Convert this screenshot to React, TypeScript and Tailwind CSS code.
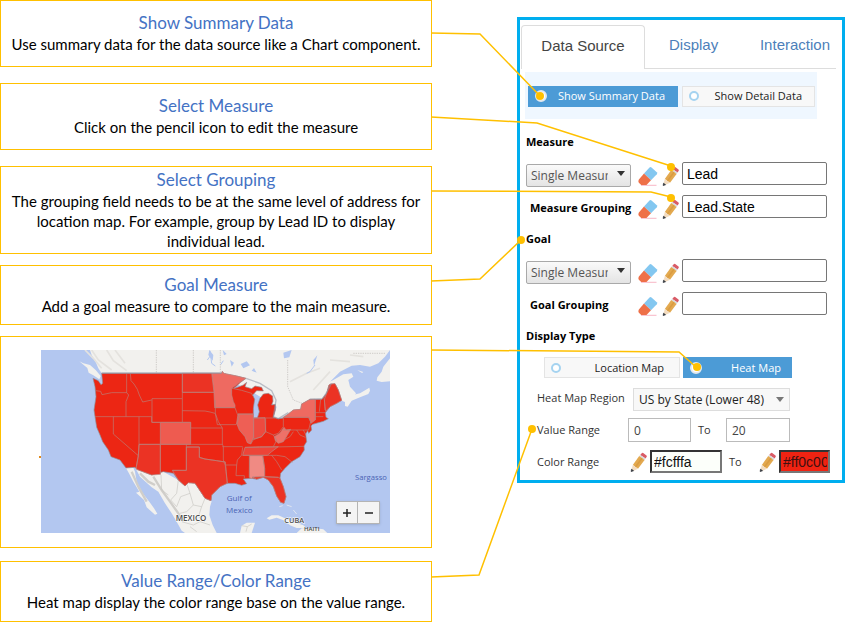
import React from "react";
import clsx from "clsx";

const calloutFont = "font-['Lato','Open_Sans',sans-serif]";
const formFont = "font-['Open_Sans','Noto_Sans',sans-serif]";
const arial = "font-['Liberation_Sans',Arial,sans-serif]";

const Eraser = () => (
  <svg viewBox="0 0 20 20" className="w-5 h-5">
    <path d="M3 19.3h15.500" stroke="#f6a5b8" strokeWidth="0.8" />
    <path d="M11.500 1.500Q12.500 0.600 13.500 1.500L18.800 6.300Q19.700 7.200 18.800 8.200L13 14.300L6 7.600Z" fill="#83c7f0" />
    <path d="M6 7.600L13 14.300L8.500 19H3.200L0.900 16.800Q-0.100 15.300 0.900 13.500Z" fill="#ee7048" />
  </svg>
);

const Pencil = () => (
  <svg viewBox="0 0 18 20" className="w-[18px] h-5">
    <path d="M10.200 2.900L11.700 1.200Q12.300 0.600 13.200 1.100L16.500 3.400Q17.200 4 16.700 4.800L15.600 6.600Z" fill="#d95b66" />
    <path d="M9.200 4.100L10.200 2.900L15.600 6.600L14.600 8Z" fill="#d6dade" />
    <path d="M9.200 4.100L14.600 8L8 16.800L2.800 13.100Z" fill="#e3a94f" />
    <path d="M11.400 5.700L12.700 6.600L6.100 15.400L4.800 14.500Z" fill="#d99c42" />
    <path d="M2.800 13.100L8 16.800L3.800 18.700L1.700 17.200Z" fill="#f3dcc0" />
    <path d="M1.500 17.300L3.500 18.700L1.200 19.500Z" fill="#33373d" stroke="#33373d" strokeWidth="0.8" />
  </svg>
);

const IconButton = ({ label, children }: { label: string; children: React.ReactNode }) => (
  <button type="button" aria-label={label} className="flex shrink-0 cursor-pointer">
    {children}
  </button>
);

type CalloutProps = { title: string; children: React.ReactNode; className: string };

const Callout = ({ title, children, className }: CalloutProps) => (
  <section
    className={clsx(
      "border border-[#ffc000] bg-white px-2 pb-px flex flex-col justify-center text-center",
      className
    )}
  >
    <h2 className="text-[17px] leading-[22px] text-[#4472c4]">{title}</h2>
    <p className="text-[15px] leading-5 text-black">{children}</p>
  </section>
);

const land = "#f2f1ee";

const HeatMap = () => (
  <div className="relative">
    <svg viewBox="33 30 1047 549" className="block w-full" role="img" aria-label="US heat map">
      <rect x="33" y="30" width="1047" height="549" fill="#b3c7f0" />

      {/* Canada */}
      <path
        fill={land}
        d="M180 30L185 45L198 68L205 85L215 100L560 112L640 140L740 200L730 235L745 235L800 220L900 180L935 182L955 190L965 180L978 160L960 140L955 120L970 110L965 100L940 103L910 120L870 140L900 125L930 95L965 77L990 75L1020 80L1045 70L1065 50L1080 30Z"
      />
      <path fill={land} d="M148 64L160 70L180 75L197 90L212 108L208 118L190 106L176 98L172 84Z" />
      <path fill={land} d="M945 185L968 165L990 160L1018 143L1020 152L1015 162L990 172L965 182L953 200L945 198Z" />
      <path fill={land} d="M982 90L1000 96L996 99Z" />
      <path fill={land} d="M1080 55L1060 80L1055 95L1042 112L1040 122L1055 126L1080 124Z" />
      <path
        fill="none"
        stroke="#e4e2de"
        strokeWidth="5"
        d="M165 30L190 55L215 85M185 30L205 60L245 90M230 30L250 62L290 92M255 30L285 70M780 125L830 100L870 85M850 150L900 95M900 60L960 65M960 45L1000 50"
      />
      <path
        fill="#b3c7f0"
        d="M538 30L550 45L548 62L535 45ZM578 30L590 42L582 46ZM600 60L612 68L605 80ZM632 72L650 64L660 76L640 85ZM760 38L785 30L778 52L762 55ZM850 60L862 46L852 78ZM665 92L672 84L680 98Z"
      />
      <path fill="none" stroke="#b3c7f0" strokeWidth="3" d="M540 32L545 70L556 78M532 60L545 42M580 62L572 74M855 75L840 95L830 100" />
      <path
        fill="none"
        stroke="#bcbab6"
        strokeWidth="2"
        strokeDasharray="4 3"
        d="M379 30V98M490 30V98M571 30V95M773 60V140L790 180L830 195M970 40H1065"
      />

      {/* Mexico, Cuba and Hispaniola */}
      <path
        fill={land}
        d="M288 384L310 383L315 395L320 425L338 460L358 485L372 505L382 521L375 524L350 502L342 480L318 458L328 455L310 425L298 402Z"
      />
      <path
        fill={land}
        d="M315 382L330 410L365 442L385 455L405 490L425 520L440 545L455 572L465 579H560L548 555L538 525L540 500L545 484L525 475L495 430L445 420L400 395Z"
      />
      <path fill="none" stroke="#d0ceca" strokeWidth="7" d="M370 410L395 450L420 485L445 520L460 545M330 400L355 425L375 435M305 395L325 440L350 485" />
      <path
        fill="none"
        stroke="#c9c7c3"
        strokeWidth="2"
        d="M393 405L395 450L415 465M445 420L440 460L422 480L440 500L452 470L480 460L470 430M480 460L490 495L470 515L450 520M490 495L515 500L525 475M515 500L505 530L525 545M455 545L490 555L510 545L540 555M480 560L500 575"
      />
      <path fill={land} d="M630 579L635 557L650 548H675L665 579Z" />
      <path fill="none" stroke="#c9c7c3" strokeWidth="2" d="M635 557L652 560L665 552M652 560L648 575" />
      <path fill={land} d="M710 535L725 526L745 526L765 535L790 546L820 556L830 564L800 564L780 556L765 542L740 533L718 539Z" />
      <path fill={land} d="M800 579L815 565L850 564L880 568L892 579Z" />
      <path fill="none" stroke="#dfe5f0" strokeWidth="3" d="M770 495L785 500M790 510L800 522M748 500L758 497" />

      {/* Continental US */}
      <path
        fill="#ec2614"
        stroke="#8f9199"
        strokeWidth="2"
        strokeLinejoin="round"
        d="M189 115L205 122L213 134L218 130L215 100H575L577 94L581 100L590 102L620 108L648 115L632 127L612 145L625 141L640 135L650 127L645 140L665 146L675 138L695 142L700 153L680 152L668 165L674 178L670 205V234L682 234L688 215L683 195L690 175L700 162L715 160L728 168L729 184L725 195L736 193L736 210L730 232L745 236L757 235L775 222L790 210L812 208L815 192L840 178L875 178L890 160L897 135L903 132L915 131L925 150L935 181L920 190L900 200L886 218L888 232L895 236L880 244L848 253L843 258L845 270L836 280L833 272L827 282L830 305L822 318L823 330L810 350L785 365L765 385L752 400L750 415L760 440L768 470L762 490L752 487L740 468L730 440L715 420L700 412L680 418L665 415L640 417L650 431L635 436L615 430L590 430L570 440L545 465L543 482L525 475L512 455L495 430L475 428L465 438L445 420L430 400L400 395L365 405L320 388L315 382L288 384L270 360L243 350L235 330L218 305L210 285L200 262L195 230L192 210L198 170L195 140Z"
      />
      {/* Lower-valued states */}
      <g stroke="#b98a86" strokeWidth="2">
        <path fill="#ee6a61" d="M545 100H575L577 94L581 100L590 102L620 108L648 115L625 130L605 145V165L610 185L615 195V203H554L552 160Z" />
        <path fill="#ee5b50" d="M391 247H482V313H391Z" />
        <path fill="#ee5f55" d="M624 222H670L671 290L662 312L652 308L645 290L628 270L620 250Z" />
        <path fill="#ed4a3f" d="M671 234L705 233L707 275L695 290L671 298Z" />
        <path fill="#f08a83" d="M659 347H698L704 385V410L668 411L665 416L658 412Z" />
        <path fill="#ee6a61" d="M760 232L775 222L790 210L812 208L815 192L840 178H856V240L843 250L837 232Z" />
        <path fill="#ee7168" d="M733 290L750 280L762 262L768 270L782 268L772 285L760 305L745 310L736 302Z" />
        <path fill="#ed4438" d="M638 346L645 322L688 320H745L725 335L712 346Z" />
        <path fill="#eb3324" d="M883 178L890 160L897 135L903 132L915 131L925 150L935 181L920 190L900 200L887 214L885 200Z" />
        <path fill="#eb3324" d="M469 321H508V352L525 357L560 362L586 366L592 430L570 440L545 465L543 482L525 475L512 455L495 430L475 428L465 438L445 420L427 391H469Z" />
        <path fill="#eb3324" d="M327 313H391V403L365 405L320 388L319 380L325 347Z" />
        <path fill="#eb3324" d="M457 100H545L552 157H457Z" />
        <path fill="#eb3324" d="M704 410L745 412L750 415L760 440L768 470L762 490L752 487L740 468L730 440L715 420L700 412L680 418L668 411Z" />
      </g>
      {/* State borders */}
      <path
        fill="none"
        stroke="#b98078"
        strokeWidth="2"
        strokeLinejoin="round"
        d="M197 152L212 154L216 164L245 158H290M290 100V158L296 165L288 185V230M195 230H365M301 100L303 122L312 132L322 148L328 165L338 186L365 180M366 176H457V247H366ZM457 100V176M457 157H552M457 212L525 213L540 216L555 220M250 230V282L325 347L319 380M327 230V313L325 347M365 230V247H391M457 247H482V264H577M327 313H577M391 313V403M469 313V391H427M469 321H508V352L525 357L560 362L586 366M556 180V220L565 245L577 264V312M554 203H615L622 222L628 228L622 248L618 254H562M562 254L556 220M624 222H670M606 145L635 151L665 160L668 168M671 234H736M707 235L707 275M760 232V260L745 280L730 285L707 275L695 290L671 298L662 312M760 270H836M760 232H835L842 245L836 270M577 312L580 320V360L586 377L588 395L592 430M577 320H638M645 322H688L822 319M638 322L635 345L622 360L620 375H586M620 375L618 407H643V415M638 346H740L765 350L787 367M658 346V412M698 346L704 385V410L745 412M725 346L740 365L755 390M730 285L740 300L730 320M762 300L780 290L790 275M800 270L810 285L826 292M856 178V240M883 178L885 210M872 178L868 215M854 218H885M854 230H880M820 270L828 285"
      />
      <path fill="none" stroke="#8b93a5" strokeWidth="4" opacity="0.55" d="M215 99H575M648 115L690 130L725 152L738 180L730 230L745 236L775 218M838 178L878 176L892 154L904 131" />

      <g className="font-['Open_Sans','Noto_Sans',sans-serif]">
        <text x="437" y="542" fontSize="24" fontWeight="600" fill="#4a4a4a" stroke="#ffffff" strokeWidth="3" paintOrder="stroke">MEXICO</text>
        <text x="763" y="549" fontSize="22" fontWeight="600" fill="#4a4a4a" stroke="#ffffff" strokeWidth="3" paintOrder="stroke">CUBA</text>
        <text x="822" y="573" fontSize="18" fontWeight="600" fill="#4a4a4a">HAITI</text>
        <text x="590" y="484" fontSize="24" fill="#4a63b4">Gulf of</text>
        <text x="588" y="518" fontSize="24" fill="#4a63b4">Mexico</text>
        <text x="975" y="420" fontSize="23" fill="#4a63b4">Sargasso</text>
      </g>
    </svg>
    <div className="absolute right-[10px] bottom-[9px] flex border border-[#b4b4b4] bg-[#f4f4f4] shadow">
      <button type="button" aria-label="Zoom in" className="w-[21px] h-[21px] flex items-center justify-center border-r border-[#b4b4b4]">
        <svg viewBox="0 0 8 8" className="w-2 h-2"><path d="M4 0V8M0 4H8" stroke="#222" strokeWidth="1.500" /></svg>
      </button>
      <button type="button" aria-label="Zoom out" className="w-[21px] h-[21px] flex items-center justify-center">
        <svg viewBox="0 0 8 8" className="w-2 h-2"><path d="M0 4H8" stroke="#222" strokeWidth="1.500" /></svg>
      </button>
    </div>
  </div>
);

type ToggleProps = { name: string; label: string; checked?: boolean; className: string };

const Toggle = ({ name, label, checked, className }: ToggleProps) => (
  <label
    className={clsx(
      "h-[21px] flex items-center justify-between pl-[6px] text-[11px] leading-4 border",
      checked
        ? "bg-[#4c9bd6] border-[#4c9bd6] text-white"
        : "bg-[#f8f8f8] border-[#e4e4e4] text-[#222]",
      className
    )}
  >
    <input
      type="radio"
      name={name}
      defaultChecked={checked}
      className={clsx(
        "appearance-none rounded-full shrink-0 bg-white",
        checked ? "w-3 h-3 border-2 border-[#e3e9ee]" : "w-[10px] h-[10px] border-2 border-[#a5d3f0]"
      )}
    />
    {label}
  </label>
);

const fieldClass = `${arial} w-[145px] h-[23px] border border-[#767676] rounded-[2px] bg-white px-1 text-[14px] leading-5 text-black`;

const FieldIcons = ({ name }: { name: string }) => (
  <div className="flex gap-1 ml-[7px] mr-[2px] pt-1">
    <IconButton label={`Clear ${name}`}><Eraser /></IconButton>
    <IconButton label={`Edit ${name}`}><Pencil /></IconButton>
  </div>
);

type MeasureGroupProps = { title: string; groupLabel: string; value?: string; group?: string };

const MeasureGroup = ({ title, groupLabel, value = "", group = "" }: MeasureGroupProps) => (
  <fieldset>
    <legend className="block text-[11px] leading-4 font-bold text-black">{title}</legend>
    <div className="mt-3 h-[23px] flex items-center">
      <div className="relative w-[105px] shrink-0">
        <select
          aria-label={`${title} type`}
          className="appearance-none w-full h-[23px] mt-1 border border-[#a9a9a9] rounded-[2px] bg-linear-to-b from-[#fafafa] to-[#e4e4e4] pl-1 pr-[22px] text-[12px] leading-5 text-[#555] overflow-hidden"
        >
          <option>Single Measure</option>
        </select>
        <svg viewBox="0 0 8 5" className="absolute right-[6px] top-[11px] w-2 h-[5px] pointer-events-none">
          <path d="M0 0H8L4 5Z" fill="#333" />
        </svg>
      </div>
      <FieldIcons name={title} />
      <input aria-label={title} defaultValue={value} className={fieldClass} />
    </div>
    <div className="mt-[10px] h-[23px] flex items-center">
      <label htmlFor={groupLabel} className="w-[105px] pl-1 pt-[2px] text-[11px] leading-4 font-bold text-black whitespace-nowrap">
        {groupLabel}
      </label>
      <FieldIcons name={groupLabel} />
      <input id={groupLabel} defaultValue={group} className={fieldClass} />
    </div>
  </fieldset>
);

const colorClass = `${arial} ml-[2px] h-[23px] border-2 border-[#333] border-r-[#777] border-b-[#777] text-[14px]`;

const SettingsPanel = () => (
  <div className={clsx(formFont, "border-[3px] border-[#00aeef] bg-white pb-[7px]")}>
    <div role="tablist" className={clsx(arial, "flex pt-[5px] pl-px pr-[6px] text-[15px] leading-5")}>
      <button type="button" role="tab" aria-selected="true" className="w-[124px] h-11 pb-1 border border-b-0 border-[#ddd] rounded-t-[4px] text-[#444]">
        Data Source
      </button>
      <div className="flex-1 flex justify-between border-b border-[#ddd] pl-6 pr-[6px] pb-1 text-[#4d7fba]">
        <button type="button" role="tab" aria-selected="false">Display</button>
        <button type="button" role="tab" aria-selected="false">Interaction</button>
      </div>
    </div>

    <div className="mt-[3px] ml-[5px] mr-[25px] h-[47px] bg-[#eff7ff] pl-[3px] pr-[2px] pt-px flex items-center gap-1">
      <Toggle name="mode" label="Show Summary Data" checked className="w-[150px] pr-3" />
      <Toggle name="mode" label="Show Detail Data" className="flex-1 pr-3" />
    </div>

    <div className="pl-[6px] pt-[15px] flex flex-col gap-[13px]">
      <MeasureGroup title="Measure" groupLabel="Measure Grouping" value="Lead" group="Lead.State" />
      <MeasureGroup title="Goal" groupLabel="Goal Grouping" />
    </div>

    <fieldset className="pl-[6px] pt-[14px]">
      <legend className="block h-[29px] pt-[13px] text-[11px] leading-4 font-bold text-black">Display Type</legend>
      <div className="-mt-px pl-[18px] flex gap-[3px]">
        <Toggle name="display" label="Location Map" className="w-[136px] pr-[15px]" />
        <Toggle name="display" label="Heat Map" checked className="w-[109px] pr-[10px]" />
      </div>

      <div className="mt-[10px] pl-[11px] flex items-center text-[11px] leading-4 text-[#333]">
        <label htmlFor="region" className="w-[96px] pb-1 whitespace-nowrap">Heat Map Region</label>
        <div className="relative w-[157px]">
          <select id="region" className="appearance-none w-full h-[23px] border border-[#ddd] bg-[#f8f8f8] pl-[5px] text-[12px] leading-5 text-[#222]">
            <option>US by State (Lower 48)</option>
          </select>
          <svg viewBox="0 0 8 5" className="absolute right-[6px] top-[9px] w-2 h-[5px] pointer-events-none">
            <path d="M0 0H8L4 5Z" fill="#777" />
          </svg>
        </div>
      </div>

      <div className="mt-[7px] pl-[11px] flex items-center text-[11px] leading-4 text-[#333]">
        <label htmlFor="min" className="w-[91px]">Value Range</label>
        <input id="min" defaultValue="0" className="w-[63px] h-6 border border-[#bbb] px-[5px] text-[12px] text-[#444]" />
        <label htmlFor="max" className="w-[35px] pl-[7px]">To</label>
        <input id="max" defaultValue="20" className="w-16 h-6 border border-[#bbb] px-[5px] text-[12px] text-[#444]" />
      </div>

      <div className="mt-2 pl-[11px] flex items-center text-[11px] leading-4 text-[#333]">
        <label htmlFor="from" className="w-[93px]">Color Range</label>
        <IconButton label="Pick start color"><Pencil /></IconButton>
        <input id="from" defaultValue="#fcfffa" className={clsx(colorClass, "w-[72px] px-[2px] bg-[#fcfffa] text-[#111]")} />
        <label htmlFor="to" className="w-[37px] pl-[7px]">To</label>
        <IconButton label="Pick end color"><Pencil /></IconButton>
        <input id="to" defaultValue="#ff0c00" className={clsx(colorClass, "w-[51px] pl-[2px] pr-px bg-[#f02312] text-[#401010]")} />
      </div>
    </fieldset>
  </div>
);

const connectors = [
  { points: "431,33 480,34 540,96", dot: [540, 96] },
  { points: "431,117 537,123 671,166", dot: [671, 167] },
  { points: "431,191 651,192 671,197", dot: [671, 198] },
  { points: "431,281 480,279 521,240", dot: [521, 240] },
  { points: "431,350 679,352 696,367", dot: [697, 367] },
  { points: "431,577 479,575 532,429", dot: [532, 429] },
];

const Connectors = () => (
  <svg viewBox="0 0 845 622" preserveAspectRatio="none" className="absolute inset-0 w-full h-full pointer-events-none">
    {connectors.map(({ points, dot }) => (
      <g key={points}>
        <polyline points={points} fill="none" stroke="#ffc000" strokeWidth="1.500" />
        <circle cx={dot[0]} cy={dot[1]} r="4" fill="#ffc000" />
      </g>
    ))}
    <path d="M39 457H41" stroke="#e08a1e" strokeWidth="2" />
  </svg>
);

const App = () => {
  return (
    <main className="relative grid grid-cols-[432fr_85fr_328fr] items-start bg-white">
      <div className={clsx(calloutFont, "flex flex-col")}>
        <Callout title="Show Summary Data" className="min-h-[67px]">
          Use summary data for the data source like a Chart component.
        </Callout>
        <Callout title="Select Measure" className="mt-4 min-h-[67px]">
          Click on the pencil icon to edit the measure
        </Callout>
        <Callout title="Select Grouping" className="mt-4 min-h-[88px]">
          The grouping field needs to be at the same level of address for location map. For example,
          group by Lead ID to display individual lead.
        </Callout>
        <Callout title="Goal Measure" className="mt-[11px] min-h-[60px]">
          Add a goal measure to compare to the main measure.
        </Callout>
        <section className="mt-[11px] border border-[#ffc000] pl-10 pr-[41px] pt-[13px] pb-[14px]">
          <HeatMap />
        </section>
        <Callout title="Value Range/Color Range" className="mt-[13px] min-h-[61px]">
          Heat map display the color range base on the value range.
        </Callout>
      </div>
      <div />
      <div className="pt-[17px]">
        <SettingsPanel />
      </div>
      <Connectors />
    </main>
  );
};

export default App;
